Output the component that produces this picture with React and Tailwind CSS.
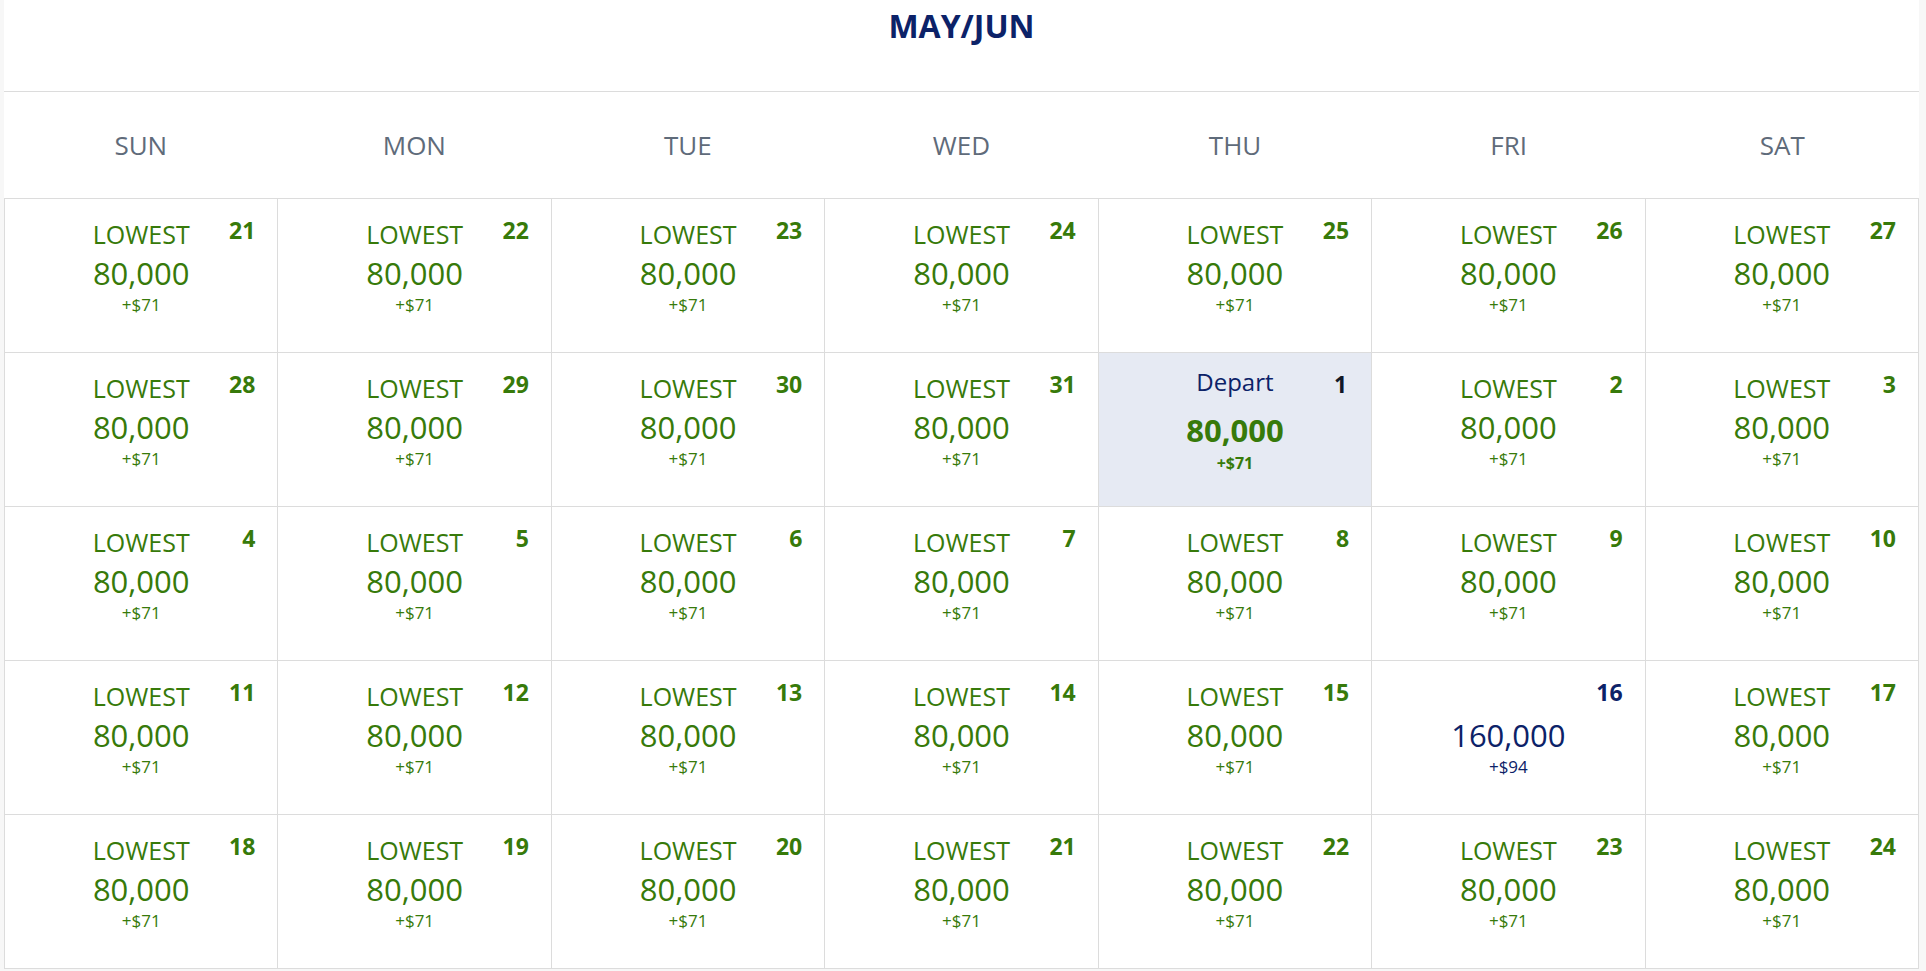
import React from "react";

const DAYS = ["SUN", "MON", "TUE", "WED", "THU", "FRI", "SAT"];

const rows = [
  [21, 22, 23, 24, 25, 26, 27],
  [28, 29, 30, 31, 1, 2, 3],
  [4, 5, 6, 7, 8, 9, 10],
  [11, 12, 13, 14, 15, 16, 17],
  [18, 19, 20, 21, 22, 23, 24],
];

function Cell({ day, r, c }) {
  const isDepart = r === 1 && c === 4;
  const isHigh = r === 3 && c === 5;

  if (isDepart) {
    return (
      <div className="relative h-[154px] border-r border-b border-[#dcdcdc] bg-[#e6eaf3] flex flex-col items-center">
        <div className="pt-[14px] text-[24px] leading-[30px] text-[#0c2268]">Depart</div>
        <div className="mt-[15px] text-[31px] leading-[36px] font-bold text-[#377a0a]">80,000</div>
        <div className="mt-[5px] text-[16px] leading-[20px] font-bold text-[#377a0a]">+$71</div>
        <div className="absolute top-[17px] right-[24px] text-[23px] leading-[28px] font-bold text-[#111827]">
          {day}
        </div>
      </div>
    );
  }

  const color = isHigh ? "text-[#0c2268]" : "text-[#377a0a]";
  return (
    <div className="relative h-[154px] border-r border-b border-[#dcdcdc] bg-white flex flex-col items-center">
      <div className={`pt-[20px] text-[25px] leading-[30px] ${color}`}>
        {isHigh ? "\u00a0" : "LOWEST"}
      </div>
      <div className={`mt-[6px] text-[31px] leading-[36px] ${color}`}>
        {isHigh ? "160,000" : "80,000"}
      </div>
      <div className={`mt-[4px] text-[17px] leading-[20px] ${color}`}>
        {isHigh ? "+$94" : "+$71"}
      </div>
      <div className={`absolute top-[17px] right-[22px] text-[23px] leading-[28px] font-bold ${color}`}>
        {day}
      </div>
    </div>
  );
}

export default function App() {
  return (
    <div
      className="min-h-[971px] w-[1926px] bg-[#f7f7f7] pl-[4px]"
      style={{ fontFamily: '"Open Sans", "Liberation Sans", sans-serif' }}
    >
      <div className="w-[1915px] bg-white">
        <div className="h-[92px] border-b border-[#dcdcdc] pt-[6px] text-center">
          <span className="text-[32px] leading-[40px] font-bold text-[#0c2268]">MAY/JUN</span>
        </div>
        <div className="grid grid-cols-7 h-[106px]">
          {DAYS.map((d) => (
            <div key={d} className="flex items-center justify-center text-[26px] text-[#5f6b7a]">
              {d}
            </div>
          ))}
        </div>
        <div className="grid grid-cols-7 border-t border-l border-[#dcdcdc]">
          {rows.map((row, r) =>
            row.map((day, c) => <Cell key={`${r}-${c}`} day={day} r={r} c={c} />)
          )}
        </div>
      </div>
    </div>
  );
}
